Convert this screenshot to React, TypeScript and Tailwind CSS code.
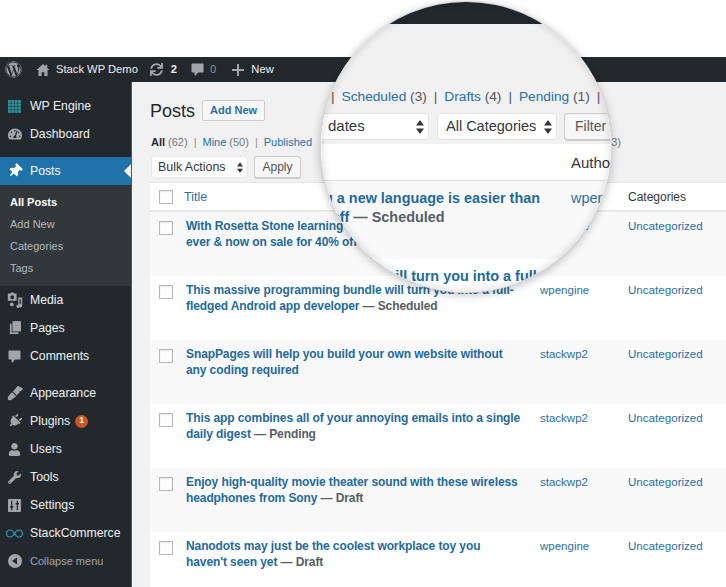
import type { ReactNode } from 'react';
import {
  FaWordpress,
  FaSync,
  FaThumbtack,
  FaTachometerAlt,
  FaPlug,
  FaUser,
  FaWrench,
} from 'react-icons/fa';

const font = "font-['Liberation_Sans',Arial,sans-serif]";

function HomeIcon() {
  return (
    <svg viewBox="0 0 20 20" className="w-[14px] h-[14px]" fill="currentColor">
      <path d="M10 1.500 0.800 10h2.700v8.500h4.600v-5.400h3.800v5.400h4.600V10h2.700l-3.100-2.900V2.600h-2.600v2.100z" />
    </svg>
  );
}

function GridIcon() {
  return (
    <svg viewBox="0 0 14 14" className="w-[13px] h-[13px]" fill="#2f8f9a">
      {[0, 3.6, 7.2, 10.8].map((y) =>
        [0, 3.6, 7.2, 10.8].map((x) => <rect key={`${x}-${y}`} x={x} y={y} width="3.100" height="3.100" />),
      )}
    </svg>
  );
}

function MediaIcon() {
  return (
    <svg viewBox="0 0 20 20" className="w-[16px] h-[16px]" fill="currentColor">
      <path d="M1 2h3l1-1.500h3L9 2h3v9H1zm5.500 2.200a2.400 2.400 0 1 0 0 4.800 2.400 2.400 0 0 0 0-4.800z" />
      <path d="M14 7h5v10.200a2.200 2.200 0 1 1-1.700-2.100V9h-1.600v9a2 2 0 1 1-1.700-2z" />
      <circle cx="6" cy="15.500" r="2.400" />
    </svg>
  );
}

function PagesIcon() {
  return (
    <svg viewBox="0 0 14 16" className="w-[12px] h-[14px]" fill="currentColor">
      <path d="M4 0h10v12H4z" />
      <path d="M1 3h2v10h8v2H1z" />
    </svg>
  );
}

function BubbleIcon({ className }: { className: string }) {
  return (
    <svg viewBox="0 0 20 20" className={className} fill="currentColor" stroke="currentColor" strokeWidth="2" strokeLinejoin="round">
      <path d="M3 3h14v10h-7l-3 4v-4H3z" />
    </svg>
  );
}

function BrushIcon() {
  return (
    <svg viewBox="0 0 20 20" className="w-[16px] h-[16px]" fill="currentColor">
      <path d="M20 4.500 13.500 1 7.500 8l5 5 2-3 1 .5 .5-3 1.500 .2z" />
      <path d="M6.500 9 11.500 14l-2 1.500L5 19 1.200 18.800 1 15l3.500-4.500z" />
    </svg>
  );
}

function PlusIcon() {
  return (
    <svg viewBox="0 0 12 12" className="w-[12px] h-[12px]" fill="currentColor">
      <path d="M5 0h2v5h5v2H7v5H5V7H0V5h5z" />
    </svg>
  );
}

function SettingsIcon() {
  return (
    <svg viewBox="0 0 14 14" className="w-[13px] h-[13px]">
      <rect width="14" height="14" rx="1" fill="currentColor" />
      <path d="M4 2v10M10 2v10" stroke="#23282d" strokeWidth="1.300" />
      <path d="M2.200 8.500h3.600M8.200 5h3.600" stroke="#23282d" strokeWidth="1.600" />
    </svg>
  );
}

function InfinityIcon() {
  return (
    <svg viewBox="0 0 24 12" className="w-[17px] h-[9px]" fill="none" stroke="#2a9bb5" strokeWidth="1.600">
      <path d="M12 6C10 2.600 8.200 1 5.800 1a5 5 0 0 0 0 10c2.400 0 4.200-1.600 6.200-5s3.800-5 6.200-5a5 5 0 0 1 0 10c-2.400 0-4.200-1.600-6.200-5z" />
    </svg>
  );
}

function CollapseIcon() {
  return (
    <svg viewBox="0 0 14 14" className="w-[14px] h-[14px]">
      <circle cx="7" cy="7" r="7" fill="currentColor" />
      <path d="M9 3.500v7L4 7z" fill="#23282d" />
    </svg>
  );
}

function SelectArrows({ size = 'small' }: { size?: 'small' | 'large' }) {
  return (
    <svg viewBox="0 0 8 14" className={size === 'small' ? 'w-[6px] h-[11px]' : 'w-[8px] h-[14px]'} fill="#32373c">
      <path d="M4 0 8 5.500H0zM4 14 0 8.500h8z" />
    </svg>
  );
}

function MenuItem({ icon, label, active, children }: { icon: ReactNode; label: string; active?: boolean; children?: ReactNode }) {
  return (
    <div className={`relative flex items-center h-7 ${active ? 'bg-[#1f73aa] text-white' : 'text-[#eef0f1]'}`}>
      <span className={`w-[30px] flex justify-center pr-[1px] shrink-0 ${active ? 'text-white' : 'text-[#a0a5aa]'}`}>{icon}</span>
      <span className="text-[12.25px]">{label}</span>
      {children}
      {active && (
        <span className="absolute right-0 top-[7px] border-y-[7px] border-y-transparent border-r-[7px] border-r-[#f1f1f1]" />
      )}
    </div>
  );
}

function Sidebar() {
  return (
    <aside className="w-[132px] shrink-0 bg-[#23282d] pt-[10px] border-r border-r-[#9a9d9f]/40">
      <MenuItem icon={<GridIcon />} label="WP Engine" />
      <MenuItem icon={<FaTachometerAlt size={14} />} label="Dashboard" />
      <div className="h-[9px]" />
      <MenuItem icon={<FaThumbtack size={14} className="rotate-45" />} label="Posts" active />
      <div className="bg-[#32373c] pt-[6px] pb-[7px] pl-[10px] text-[11px] text-[#b4b9be]">
        <div className="h-[22px] leading-[22px] font-bold text-white">All Posts</div>
        <div className="h-[22px] leading-[22px]">Add New</div>
        <div className="h-[22px] leading-[22px]">Categories</div>
        <div className="h-[22px] leading-[22px]">Tags</div>
      </div>
      <MenuItem icon={<MediaIcon />} label="Media" />
      <MenuItem icon={<PagesIcon />} label="Pages" />
      <MenuItem icon={<BubbleIcon className="w-[15px] h-[15px]" />} label="Comments" />
      <div className="h-[9px]" />
      <MenuItem icon={<BrushIcon />} label="Appearance" />
      <MenuItem icon={<FaPlug size={14} className="rotate-45" />} label="Plugins">
        <span className="ml-[5px] w-[13px] h-[13px] rounded-full bg-[#ca5526] text-white text-[9px] font-bold flex items-center justify-center">1</span>
      </MenuItem>
      <MenuItem icon={<FaUser size={13} />} label="Users" />
      <MenuItem icon={<FaWrench size={13} />} label="Tools" />
      <MenuItem icon={<SettingsIcon />} label="Settings" />
      <MenuItem icon={<InfinityIcon />} label="StackCommerce" />
      <div className="flex items-center h-7 text-[#a0a5aa]">
        <span className="w-[30px] flex justify-center pr-[1px]"><CollapseIcon /></span>
        <span className="text-[11px]">Collapse menu</span>
      </div>
    </aside>
  );
}

function AdminBar() {
  return (
    <header className="h-[25px] bg-[#23282d] flex items-center text-[#eef0f1] text-[11.2px] shrink-0">
      <FaWordpress size={17} className="ml-[5px] text-[#a0a5aa]" />
      <span className="ml-[14px] text-[#a0a5aa]"><HomeIcon /></span>
      <span className="ml-[6px] whitespace-nowrap">Stack WP Demo</span>
      <FaSync size={13} className="ml-[12px] text-[#a0a5aa]" />
      <span className="ml-[8px] font-bold">2</span>
      <BubbleIcon className="ml-[13px] w-[15px] h-[15px] text-[#a0a5aa]" />
      <span className="ml-[5px] text-[#8a8f94]">0</span>
      <span className="ml-[16px] text-[#a0a5aa]"><PlusIcon /></span>
      <span className="ml-[7px]">New</span>
    </header>
  );
}

const rows = [
  { lines: ['With Rosetta Stone learning a new language is easier than', 'ever & now on sale for 40% off'], status: 'Scheduled', author: 'wpengine' },
  { lines: ['This massive programming bundle will turn you into a full-', 'fledged Android app developer'], status: 'Scheduled', author: 'wpengine' },
  { lines: ['SnapPages will help you build your own website without', 'any coding required'], status: '', author: 'stackwp2' },
  { lines: ['This app combines all of your annoying emails into a single', 'daily digest'], status: 'Pending', author: 'stackwp2' },
  { lines: ['Enjoy high-quality movie theater sound with these wireless', 'headphones from Sony'], status: 'Draft', author: 'stackwp2' },
  { lines: ['Nanodots may just be the coolest workplace toy you', "haven't seen yet"], status: 'Draft', author: 'wpengine' },
];

function Checkbox() {
  return <span className="block w-[14px] h-[14px] border border-[#b4b9be] bg-white shadow-[inset_0_1px_2px_rgba(0,0,0,0.1)]" />;
}

function PostRow({ row, striped }: { row: (typeof rows)[number]; striped: boolean }) {
  return (
    <div className={`flex h-16 shrink-0 pt-[6px] ${striped ? 'bg-[#f9f9f9]' : 'bg-white'}`}>
      <div className="w-[36px] shrink-0 pl-[9px] pt-[3px]"><Checkbox /></div>
      <div className="w-[354px] shrink-0 text-[12px] tracking-[-0.1px] leading-4 font-bold text-[#23699c] whitespace-nowrap">
        <div>{row.lines[0]}</div>
        <div>
          {row.lines[1]}
          {row.status && <span className="text-[#555d66]"> — {row.status}</span>}
        </div>
      </div>
      <div className="w-[88px] shrink-0 text-[11.5px] leading-4 text-[#2a6fa3]">{row.author}</div>
      <div className="text-[11.6px] leading-4 text-[#2a6fa3]">Uncategorized</div>
    </div>
  );
}

function Lens() {
  return (
    <div className="absolute left-[320px] top-[1px] w-[292px] h-[292px] rounded-full overflow-hidden bg-white flex flex-col border border-[#d6d6d6] shadow-[0_2px_8px_rgba(0,0,0,0.25)]">
      <div className="h-[22px] bg-[#23282d] shrink-0" />
      <div className="h-[120px] bg-[#f1f1f1] shrink-0">
        <div className="flex items-center gap-[7px] pl-[10px] pt-[63px] text-[13.7px] leading-5 text-[#555] whitespace-nowrap">
          <span>|</span>
          <span><span className="text-[#2a6fa3]">Scheduled</span> (3)</span>
          <span>|</span>
          <span><span className="text-[#2a6fa3]">Drafts</span> (4)</span>
          <span>|</span>
          <span><span className="text-[#2a6fa3]">Pending</span> (1)</span>
          <span>|</span>
        </div>
        <div className="flex items-start pt-[6px] -ml-[20px] text-[15px] text-[#32373c]">
          <div className="w-[128px] h-[27px] bg-white rounded-[4px] border border-[#e4e4e4] flex items-center justify-between pl-[26px] pr-[4px] shrink-0">
            <span>dates</span>
            <SelectArrows size="large" />
          </div>
          <div className="ml-[8px] w-[120px] h-[27px] bg-white rounded-[4px] border border-[#e4e4e4] flex items-center justify-between pl-[8px] pr-[4px] shrink-0 whitespace-nowrap">
            <span className="text-[14.5px]">All Categories</span>
            <SelectArrows size="large" />
          </div>
          <div className="ml-[7px] w-[70px] h-[28px] bg-[#f7f7f7] rounded-[4px] border border-[#ccc] border-b-2 flex items-center pl-[10px] text-[14px] text-[#555] shrink-0">Filter</div>
        </div>
      </div>
      <div className="h-[37px] bg-white border-b border-b-[#e1e1e1] shrink-0 pl-[250px] pt-[8px] text-[15px] text-[#32373c]">Author</div>
      <div className="h-[78px] bg-[#f9f9f9] shrink-0 flex text-[14.4px] leading-[19px] pt-[8px] font-bold text-[#23699c] whitespace-nowrap">
        <div className="w-[219px] shrink-0 flex flex-col items-end">
          <div>g a new language is easier than</div>
          <div className="w-[209px] text-left"><span>off</span><span className="text-[#555d66]"> — Scheduled</span></div>
        </div>
        <div className="ml-[31px] font-normal text-[#2a6fa3]">wpengine</div>
      </div>
      <div className="flex-1 bg-white pl-[63px] pt-[8px] text-[14.4px] leading-[19px] font-bold text-[#23699c] whitespace-nowrap">will turn you into a full-</div>
      <div className="absolute inset-0 rounded-full shadow-[inset_0_0_9px_rgba(0,0,0,0.16)]" />
    </div>
  );
}

export default function App() {
  return (
    <div className={`relative w-[726px] h-[587px] overflow-hidden bg-white antialiased ${font}`}>
      <div className="h-[57px]" />
      <AdminBar />
      <div className="flex h-[505px]">
        <Sidebar />
        <main className="flex-1 min-w-0 bg-[#f1f1f1] pl-[18px] overflow-hidden">
          <div className="flex items-center pt-[18px] h-[39px]">
            <h1 className="text-[18px] leading-none text-[#23282d]">Posts</h1>
            <span className="ml-[7px] w-[63px] h-[21px] bg-[#f7f7f7] border border-[#ccc] rounded-[2px] flex items-center justify-center text-[11px] font-bold text-[#2a6fa3]">Add New</span>
          </div>
          <div className="flex items-center h-[18px] mt-[12px] pl-[1px] text-[11px] text-[#8a9096] w-[471px] whitespace-nowrap">
            <b className="text-[#23282d]">All</b>
            <span className="ml-[3px] text-[#777]">(62)</span>
            <span className="mx-[6px]">|</span>
            <span className="text-[#2a6fa3]">Mine</span>
            <span className="ml-[3px] text-[#777]">(50)</span>
            <span className="mx-[6px]">|</span>
            <span className="text-[#2a6fa3]">Published</span>
            <span className="ml-auto text-[#777]">(3)</span>
          </div>
          <div className="flex items-start mt-[5px] h-[26px] pl-[1px] text-[12px]">
            <div className="w-[97px] h-[22px] bg-white rounded-[3px] border border-[#e8e8e8] flex items-center justify-between pl-[6px] pr-[4px] text-[#32373c]">
              <span className="text-[12.4px]">Bulk Actions</span>
              <SelectArrows />
            </div>
            <div className="ml-[6px] w-[47px] h-[23px] bg-[#f7f7f7] border border-[#ccc] border-b-2 rounded-[3px] flex items-center justify-center text-[#555]">Apply</div>
          </div>
          <div className="w-[600px] bg-white border-t border-t-[#e5e5e5]">
            <div className="flex items-center h-[29px] border-b-2 border-b-[#e8e8e8] text-[12px]">
              <div className="w-[34px] shrink-0 pl-[9px]"><Checkbox /></div>
              <div className="w-[444px] shrink-0 pt-[2px] text-[12.5px] text-[#2a6fa3]">Title</div>
              <div className="text-[#32373c]">Categories</div>
            </div>
            {rows.map((row, index) => (
              <PostRow key={index} row={row} striped={index % 2 === 0} />
            ))}
          </div>
        </main>
      </div>
      <Lens />
    </div>
  );
}
